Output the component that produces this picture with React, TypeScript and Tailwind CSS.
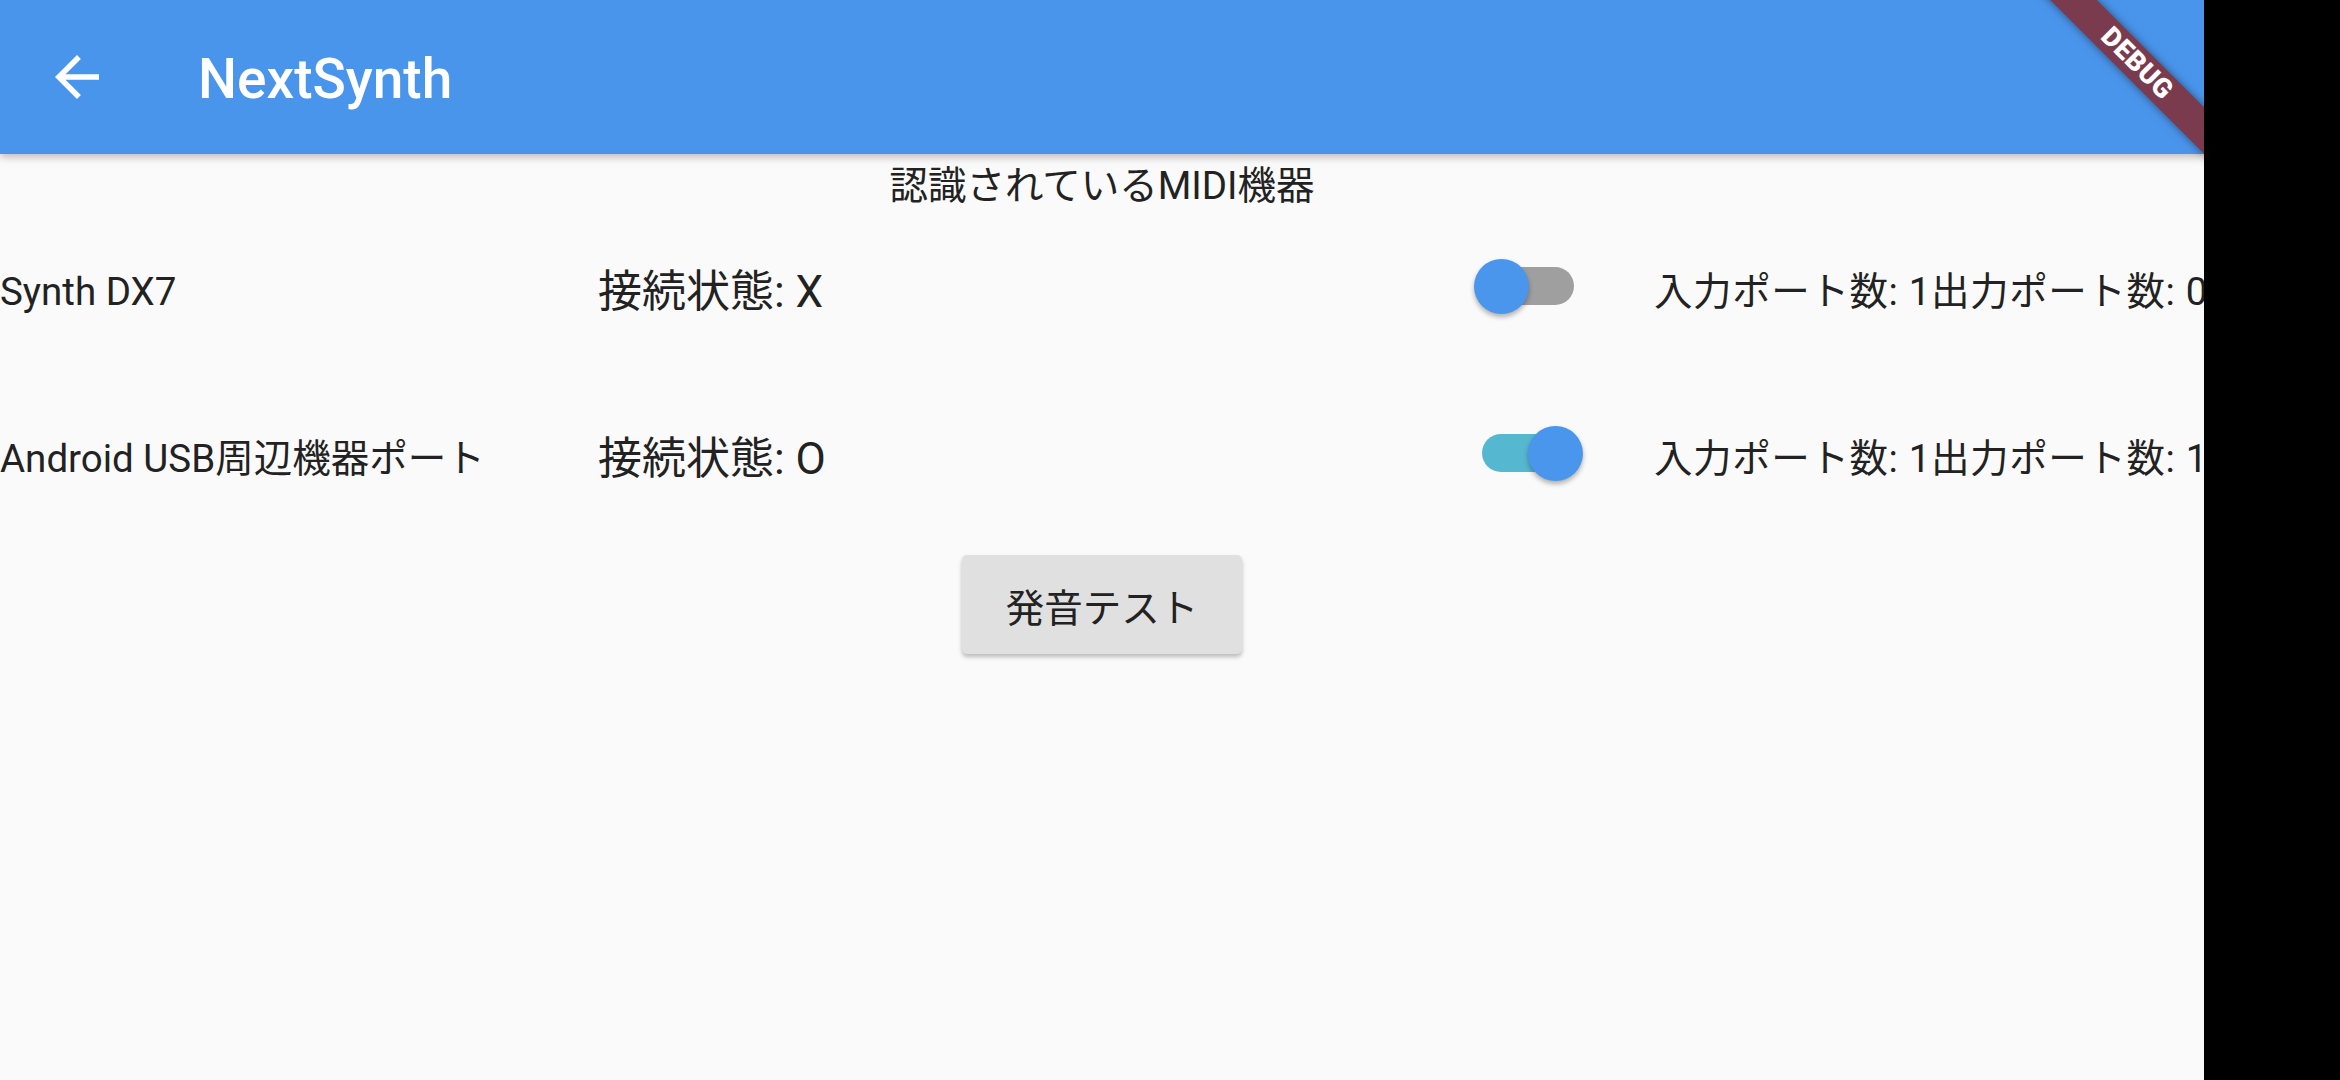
const FONT = "font-['Roboto','Noto_Sans_CJK_JP',sans-serif]";

type Device = {
  name: string;
  connected: boolean;
  inputs: number;
  outputs: number;
};

const devices: Device[] = [
  { name: "Synth DX7", connected: false, inputs: 1, outputs: 0 },
  { name: "Android USB周辺機器ポート", connected: true, inputs: 1, outputs: 1 },
];

function BackArrow() {
  return (
    <svg viewBox="0 0 24 24" className="w-[66px] h-[66px] fill-white">
      <path d="M20 11H7.83l5.59-5.59L12 4l-8 8 8 8 1.41-1.41L7.83 13H20v-2z" />
    </svg>
  );
}

function Toggle({ on }: { on: boolean }) {
  return (
    <div className="relative w-[92px] h-[55px] mb-[11px] flex items-center">
      <div
        className={
          on
            ? "w-[92px] h-[38px] rounded-full bg-[#55b8d0]"
            : "w-[92px] h-[38px] rounded-full bg-[#9f9f9f]"
        }
      />
      <div
        className={
          on
            ? "absolute top-0 left-[46px] w-[55px] h-[55px] rounded-full bg-[#4a96ec] shadow-[0_3px_5px_rgba(0,0,0,0.3)]"
            : "absolute top-0 left-[-8px] w-[55px] h-[55px] rounded-full bg-[#4a96ec] shadow-[0_3px_5px_rgba(0,0,0,0.3)]"
        }
      />
    </div>
  );
}

function DeviceRow({ d, height }: { d: Device; height: string }) {
  return (
    <div className={`flex items-center ${height} text-[#222]`}>
      <div className="w-[598px] text-[38.5px] leading-[60px] whitespace-nowrap">{d.name}</div>
      <div className="w-[884px] text-[44px] leading-[60px] whitespace-nowrap">
        接続状態: {d.connected ? "O" : "X"}
      </div>
      <Toggle on={d.connected} />
      <div className="ml-[80px] flex-1 min-w-0 overflow-hidden whitespace-nowrap text-[38.5px] leading-[60px] tracking-[0.6px]">
        入力ポート数: {d.inputs}出力ポート数: {d.outputs}
      </div>
    </div>
  );
}

export default function App() {
  return (
    <div className={`flex w-[2340px] h-[1080px] ${FONT}`}>
      <div className="relative w-[2204px] h-[1080px] overflow-hidden bg-[#fafafa] flex flex-col">
        <header className="relative z-10 h-[154px] shrink-0 bg-[#4a95ec] flex items-center shadow-[0_3px_8px_rgba(0,0,0,0.25)]">
          <div className="w-[154px] flex justify-center">
            <BackArrow />
          </div>
          <h1 className="ml-[44px] mt-[4px] text-white text-[55px] leading-[70px] font-medium">
            NextSynth
          </h1>
        </header>

        <div className="h-[64px] flex items-center justify-center text-[38.5px] leading-[60px] text-[#222]">
          認識されているMIDI機器
        </div>

        <DeviceRow d={devices[0]} height="h-[147px]" />
        <DeviceRow d={devices[1]} height="h-[187px]" />

        <div className="mt-[3px] flex justify-center">
          <button className="w-[280px] h-[99px] pt-[9px] rounded-[5px] bg-[#e0e0e0] text-[#222] text-[38.5px] leading-[60px] flex items-center justify-center shadow-[0_3px_4px_rgba(0,0,0,0.25)]">
            発音テスト
          </button>
        </div>

        <div className="absolute z-20 left-[1987px] top-[47px] w-[300px] h-[33px] rotate-45 bg-[#7a3b4f] shadow-[0_0_10px_rgba(0,0,0,0.45)] flex items-center justify-center">
          <span className="text-white text-[27px] leading-none font-black tracking-[0.5px]">DEBUG</span>
        </div>
      </div>
      <div className="flex-1 bg-black" />
    </div>
  );
}
